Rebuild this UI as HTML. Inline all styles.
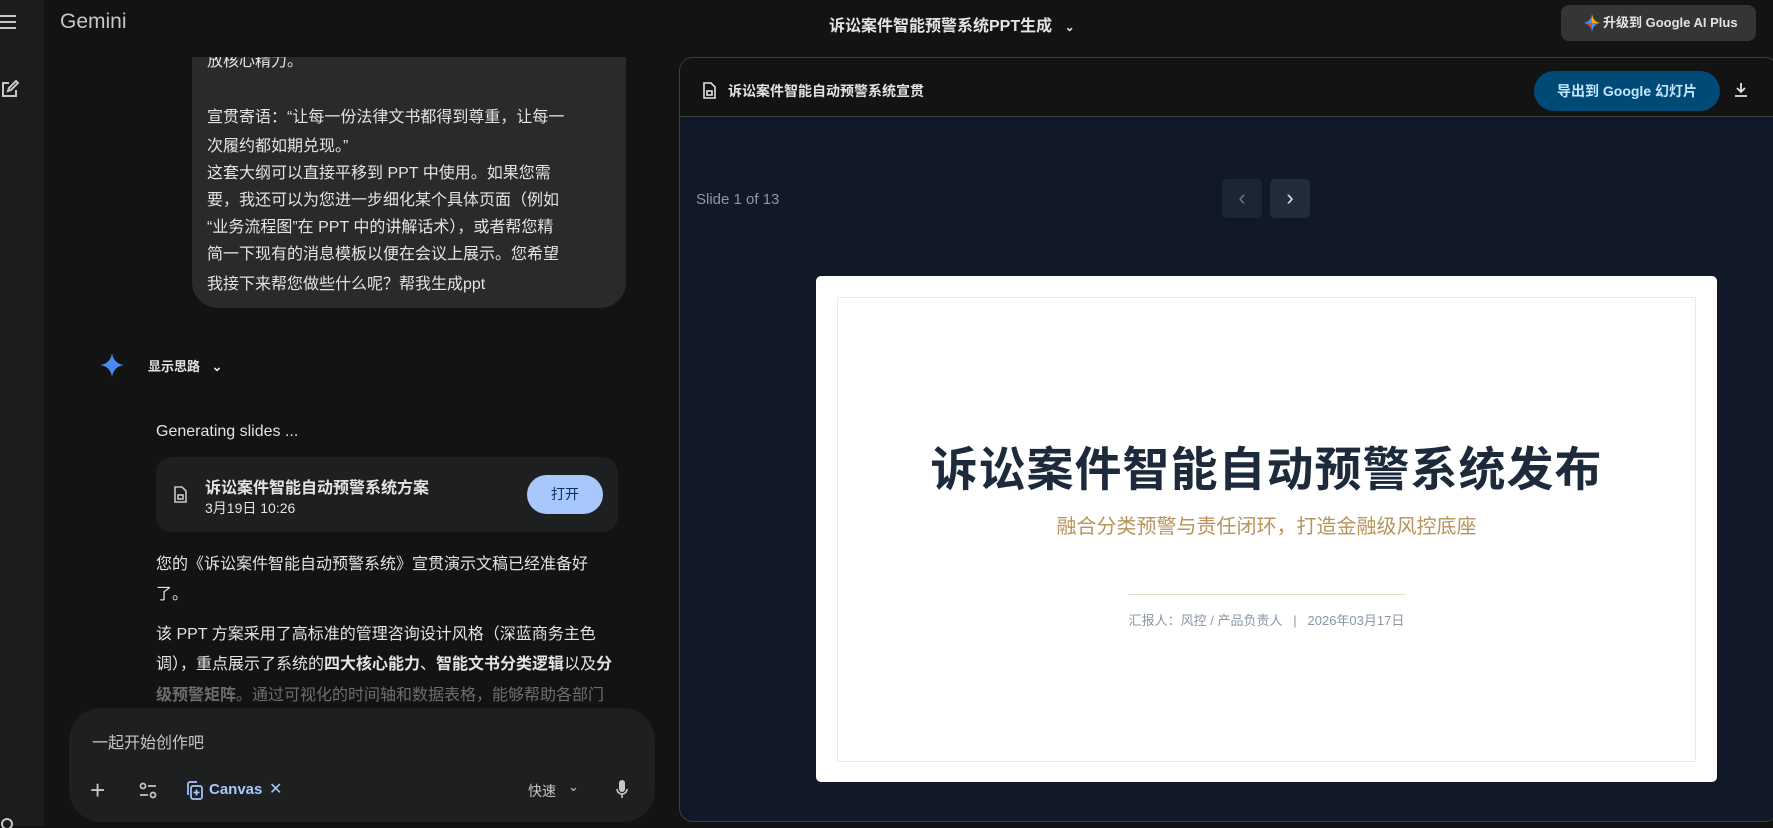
<!DOCTYPE html>
<html><head><meta charset="utf-8"><style>
*{margin:0;padding:0;box-sizing:border-box}
body{width:1773px;height:826px;background:#131314;overflow:hidden;position:relative;font-family:"Liberation Sans","Noto Sans CJK SC",sans-serif;color:#e3e3e3}
.abs{position:absolute}
.side{left:0;top:0;width:44px;height:826px;background:#1b1c1d}
.bubble{left:192px;top:30px;width:434px;height:278px;background:#282a2c;border-radius:26px}
.bt{position:absolute;left:207px;font-size:16px;color:#e3e3e3;white-space:nowrap}
.hdr{left:44px;top:0;width:1729px;height:57px;background:#131314}
.panel{left:679px;top:57px;width:1100px;height:765px;border:1px solid #3c4043;border-radius:14px;background:#111827;overflow:hidden}
.ph{position:absolute;left:0;top:0;right:0;height:59px;background:#131314;border-bottom:1px solid #3c4043}
</style></head><body>
<div class="abs bubble"></div>
<div class="bt" style="top:47px">放核心精力。</div>
<div class="bt" style="top:103px">宣贯寄语：“让每一份法律文书都得到尊重，让每一</div>
<div class="bt" style="top:132px">次履约都如期兑现。”</div>
<div class="bt" style="top:159px">这套大纲可以直接平移到 PPT 中使用。如果您需</div>
<div class="bt" style="top:186px">要，我还可以为您进一步细化某个具体页面（例如</div>
<div class="bt" style="top:213px">“业务流程图”在 PPT 中的讲解话术），或者帮您精</div>
<div class="bt" style="top:240px">简一下现有的消息模板以便在会议上展示。您希望</div>
<div class="bt" style="top:270px">我接下来帮您做些什么呢？帮我生成ppt</div>

<div class="abs hdr"></div>
<div class="abs side"></div>
<div class="abs" style="left:0;top:15px;width:16px;height:14px;border-top:2px solid #c4c7c5;border-bottom:2px solid #c4c7c5"><div style="margin-top:4px;border-top:2px solid #c4c7c5"></div></div>
<svg class="abs" style="left:1px;top:80px" width="18" height="18" viewBox="0 0 18 18" fill="none" stroke="#c4c7c5" stroke-width="2"><path d="M8 3H2v13h13v-6"/><path d="M7 11l1-3 7-7 2 2-7 7z"/></svg>
<svg class="abs" style="left:0;top:816px" width="16" height="12" viewBox="0 0 16 12"><circle cx="7" cy="8" r="5" fill="none" stroke="#c4c7c5" stroke-width="2"/></svg>
<div class="abs" style="left:60px;top:10px;font-size:21px;color:#c4c7c5">Gemini</div>
<div class="abs" style="left:829px;top:12px;font-size:16px;font-weight:bold;color:#e3e3e3">诉讼案件智能预警系统PPT生成 <span style="font-size:12px;margin-left:8px">⌄</span></div>
<div class="abs" style="left:1561px;top:5px;width:195px;height:36px;background:#333537;border-radius:8px;font-size:13px;font-weight:bold;color:#e3e3e3;line-height:36px;padding-left:42px">升级到 Google AI Plus</div>
<svg class="abs" style="left:1584px;top:14px" width="16" height="18" viewBox="0 0 16 18"><path d="M8 0C8.8 5 11 8 16 9 11 10 8.8 13 8 18 7.2 13 5 10 0 9 5 8 7.2 5 8 0z" fill="#4f8df5"/><path d="M8 0C8.8 5 11 8 16 9H8z" fill="#f4b400"/><path d="M0 9C5 10 7.2 13 8 18V9z" fill="#e94235"/></svg>

<svg class="abs" style="left:100px;top:353px" width="24" height="24" viewBox="0 0 24 24"><path d="M12 0C13 7 17 11 24 12 17 13 13 17 12 24 11 17 7 13 0 12 7 11 11 7 12 0z" fill="#4a8af4"/></svg>
<div class="abs" style="left:148px;top:356px;font-size:13px;font-weight:bold">显示思路 <span style="margin-left:8px">⌄</span></div>
<div class="abs" style="left:156px;top:423px;font-size:16px">Generating slides ...</div>
<div class="abs" style="left:156px;top:457px;width:462px;height:75px;background:#1e1f20;border-radius:16px"></div>
<svg class="abs" style="left:174px;top:486px" width="13" height="17" viewBox="0 0 13 17" fill="none" stroke="#c4c7c5" stroke-width="1.6"><path d="M1 1h7l4 4v11H1z"/><rect x="4" y="9" width="5" height="4"/></svg>
<div class="abs" style="left:205px;top:474px;font-size:16px;font-weight:bold">诉讼案件智能自动预警系统方案</div>
<div class="abs" style="left:205px;top:498px;font-size:14px">3月19日 10:26</div>
<div class="abs" style="left:527px;top:475px;width:76px;height:39px;background:#a8c7fa;border-radius:20px;color:#062e6f;font-size:14px;line-height:39px;text-align:center">打开</div>
<div class="bt" style="left:156px;top:550px">您的《诉讼案件智能自动预警系统》宣贯演示文稿已经准备好</div>
<div class="bt" style="left:156px;top:580px">了。</div>
<div class="bt" style="left:156px;top:620px">该 PPT 方案采用了高标准的管理咨询设计风格（深蓝商务主色</div>
<div class="bt" style="left:156px;top:650px">调），重点展示了系统的<b>四大核心能力</b>、<b>智能文书分类逻辑</b>以及<b>分</b></div>
<div class="bt" style="left:156px;top:681px;color:#6b6d70"><b>级预警矩阵</b>。通过可视化的时间轴和数据表格，能够帮助各部门</div>
<div class="abs" style="left:69px;top:708px;width:586px;height:114px;background:#1e1f20;border-radius:32px"></div>
<div class="abs" style="left:92px;top:729px;font-size:16px;color:#c4c7c5">一起开始创作吧</div>
<div class="abs" style="left:90px;top:775px;font-size:26px;color:#c4c7c5;font-weight:300">+</div>
<svg class="abs" style="left:139px;top:782px" width="18" height="17" viewBox="0 0 18 17" fill="none" stroke="#c4c7c5" stroke-width="1.8"><circle cx="4" cy="4" r="2.5"/><path d="M9 4h8M1 13h8"/><circle cx="14" cy="13" r="2.5"/></svg>
<svg class="abs" style="left:185px;top:781px" width="18" height="19" viewBox="0 0 18 19" fill="none" stroke="#a8c7fa" stroke-width="1.7"><path d="M3 14V3a2 2 0 012-2h7"/><rect x="6" y="5" width="11" height="13" rx="2"/><path d="M11.5 8.5v6M8.5 11.5h6"/></svg>
<div class="abs" style="left:209px;top:781px;font-size:15px;font-weight:bold;color:#a8c7fa">Canvas</div>
<div class="abs" style="left:269px;top:779px;font-size:16px;color:#a8c7fa">✕</div>
<div class="abs" style="left:528px;top:781px;font-size:14px;color:#c4c7c5">快速</div>
<div class="abs" style="left:568px;top:779px;font-size:13px;color:#c4c7c5">⌄</div>
<svg class="abs" style="left:616px;top:780px" width="12" height="19" viewBox="0 0 12 19"><rect x="3" y="0" width="6" height="12" rx="3" fill="#c4c7c5"/><path d="M1 9a5 5 0 0010 0M6 14v4" stroke="#c4c7c5" stroke-width="1.6" fill="none"/></svg>

<div class="abs panel">
<div class="ph"></div>
<svg class="abs" style="left:23px;top:24px" width="13" height="17" viewBox="0 0 13 17" fill="none" stroke="#e3e3e3" stroke-width="1.6"><path d="M1 1h7l4 4v11H1z"/><rect x="4" y="9" width="5" height="4"/></svg>
<div class="abs" style="left:48px;top:23px;font-size:14px;font-weight:bold">诉讼案件智能自动预警系统宣贯</div>
<div class="abs" style="left:854px;top:13px;width:186px;height:40px;background:#004a77;border-radius:20px;font-size:14px;font-weight:bold;color:#c2e7ff;line-height:40px;text-align:center">导出到 Google 幻灯片</div>
<svg class="abs" style="left:1054px;top:24px" width="14" height="16" viewBox="0 0 14 16" fill="none" stroke="#e3e3e3" stroke-width="1.8"><path d="M7 1v9M3 6l4 4 4-4M1 14h12"/></svg>
<div class="abs" style="left:16px;top:133px;font-size:15px;color:#8e96a3">Slide 1 of 13</div>
<div class="abs" style="left:542px;top:121px;width:40px;height:39px;background:#1c2533;border-radius:5px;color:#6b7380;font-size:22px;text-align:center;line-height:37px">‹</div>
<div class="abs" style="left:590px;top:121px;width:40px;height:39px;background:#222c3a;border-radius:5px;color:#e3e3e3;font-size:22px;text-align:center;line-height:37px">›</div>
<div class="abs" style="left:136px;top:218px;width:901px;height:506px;background:#fff;border-radius:5px">
 <div class="abs" style="left:21px;top:21px;width:859px;height:465px;border:1px solid #eeeadf"></div>
 <div class="abs" style="left:0;width:901px;top:155px;text-align:center;font-size:47px;font-weight:bold;color:#1c2a3b;letter-spacing:1px">诉讼案件智能自动预警系统发布</div>
 <div class="abs" style="left:0;width:901px;top:234px;text-align:center;font-size:20px;color:#b8935a">融合分类预警与责任闭环，打造金融级风控底座</div>
 <div class="abs" style="left:312px;top:318px;width:277px;height:1px;background:#e6dcc6"></div>
 <div class="abs" style="left:0;width:901px;top:334px;text-align:center;font-size:13px;color:#8a96a8">汇报人：风控 / 产品负责人 &nbsp; | &nbsp; 2026年03月17日</div>
</div>
</div>
</body></html>
